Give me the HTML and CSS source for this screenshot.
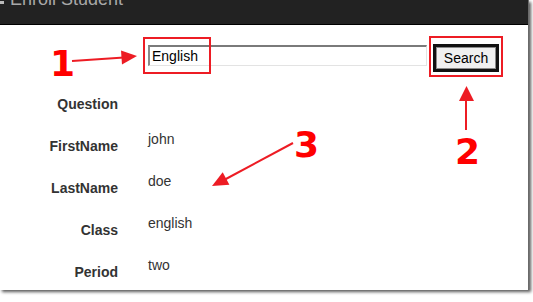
FILE: index.html
```html
<!DOCTYPE html>
<html>
<head>
<meta charset="utf-8">
<link rel="stylesheet" href="styles.css">
</head>
<body>
<div class="panel">
  <div class="header"><span class="bullet"></span><span class="title">Enroll Student</span></div>
  <div class="form">
    <div class="search-row">
      <input class="field" type="text" value="English">
      <button class="btn">Search</button>
    </div>
    <div class="label">Question</div><div class="value"></div>
    <div class="label">FirstName</div><div class="value">john</div>
    <div class="label">LastName</div><div class="value">doe</div>
    <div class="label">Class</div><div class="value">english</div>
    <div class="label">Period</div><div class="value">two</div>
  </div>
</div>
<svg class="notes" width="533" height="302" viewBox="0 0 533 302">
  <rect x="144" y="38" width="66" height="35" fill="none" stroke="#ed1c24" stroke-width="2"/>
  <rect x="430" y="37" width="72" height="39" fill="none" stroke="#ed1c24" stroke-width="2"/>
  <line x1="72" y1="61" x2="124" y2="57.5" stroke="#ed1c24" stroke-width="2"/>
  <polygon points="137,56 121,50.5 122,64.5" fill="#ed1c24"/>
  <line x1="466" y1="130" x2="466" y2="98" stroke="#ed1c24" stroke-width="2"/>
  <polygon points="466.5,86 459,101 474,101" fill="#ed1c24"/>
  <line x1="293" y1="143" x2="224" y2="180" stroke="#ed1c24" stroke-width="2"/>
  <polygon points="212,186 222.7,172.3 229.4,184.7" fill="#ed1c24"/>
  <text x="50" y="76" class="num">1</text>
  <text x="455" y="164" class="num">2</text>
  <text x="294" y="157" class="num">3</text>
</svg>
</body>
</html>
```
FILE: styles.css
```css
html, body {
  margin: 0;
  padding: 0;
  background: #fff;
  font-family: "Liberation Sans", Arial, sans-serif;
}
body {
  position: relative;
  width: 533px;
  height: 302px;
  overflow: hidden;
}
.panel {
  width: 528px;
  height: 290px;
  background: #fff;
  border-right: 1px solid #6a6a6a;
  box-shadow: 2px 2px 3px rgba(0, 0, 0, 0.65);
}
.header {
  height: 24px;
  background: #222;
  border-bottom: 1px solid #000;
  display: flex;
  align-items: flex-start;
  overflow: hidden;
}
.bullet {
  display: inline-block;
  width: 4px;
  height: 3px;
  margin-top: 1px;
  background: #bbb;
}
.title {
  color: #a8a8a8;
  font-size: 18px;
  line-height: 18px;
  margin-top: -10px;
  margin-left: 6px;
}
.form {
  display: grid;
  grid-template-columns: 118px 1fr;
  column-gap: 30px;
  padding-top: 19px;
}
.search-row {
  grid-column: 2;
  display: flex;
  align-items: flex-start;
  gap: 6px;
  margin-bottom: 17px;
}
.field {
  box-sizing: border-box;
  width: 279px;
  height: 21px;
  margin: 1px 0 0;
  padding: 0 2px;
  border-style: solid;
  border-width: 2px 1px 1px 2px;
  border-color: #7a7a7a #e3e3e3 #e3e3e3 #8a8a8a;
  font-family: "Liberation Sans", Arial, sans-serif;
  font-size: 14px;
  color: #000;
  background: #fff;
  outline: none;
}
.btn {
  box-sizing: border-box;
  width: 66px;
  height: 28px;
  margin: 0;
  padding: 0;
  border: 3px solid #111;
  box-shadow: inset 0 0 0 1px #8a8a8a;
  background: #f0f0f0;
  font-family: "Liberation Sans", Arial, sans-serif;
  font-size: 14px;
  color: #000;
}
.label {
  height: 42px;
  box-sizing: border-box;
  padding-top: 7px;
  text-align: right;
  font-weight: bold;
  font-size: 14px;
  line-height: 16px;
  color: #333;
}
.value {
  height: 42px;
  font-size: 14px;
  line-height: 16px;
  color: #333;
}
.notes {
  position: absolute;
  left: 0;
  top: 0;
}
.num {
  font-family: "DejaVu Sans", sans-serif;
  font-weight: bold;
  font-size: 36px;
  fill: #ff0000;
}
```
